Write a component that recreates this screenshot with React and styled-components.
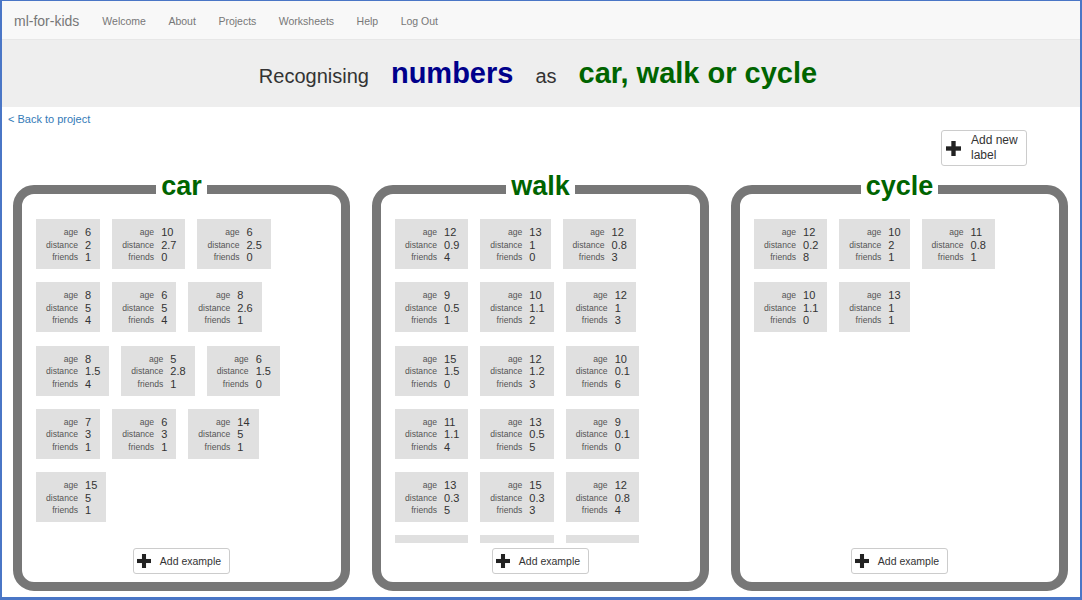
import React from "react";
import styled, { createGlobalStyle } from "styled-components";

const GlobalStyle = createGlobalStyle`
	html, body {
		margin: 0;
		padding: 0;
		background: #fff;
	}
	body {
		font-family: "Liberation Sans", Arial, Helvetica, sans-serif;
		color: #333;
	}
	* {
		box-sizing: border-box;
	}
`;

const labels = [
	{
		name: "car",
		examples: [
			[6, 2, 1], [10, 2.7, 0], [6, 2.5, 0],
			[8, 5, 4], [6, 5, 4], [8, 2.6, 1],
			[8, 1.5, 4], [5, 2.8, 1], [6, 1.5, 0],
			[7, 3, 1], [6, 3, 1], [14, 5, 1],
			[15, 5, 1],
		],
	},
	{
		name: "walk",
		examples: [
			[12, 0.9, 4], [13, 1, 0], [12, 0.8, 3],
			[9, 0.5, 1], [10, 1.1, 2], [12, 1, 3],
			[15, 1.5, 0], [12, 1.2, 3], [10, 0.1, 6],
			[11, 1.1, 4], [13, 0.5, 5], [9, 0.1, 0],
			[13, 0.3, 5], [15, 0.3, 3], [12, 0.8, 4],
			[10, 0.4, 2], [14, 0.6, 1], [11, 0.2, 3],
		],
	},
	{
		name: "cycle",
		examples: [
			[12, 0.2, 8], [10, 2, 1], [11, 0.8, 1],
			[10, 1.1, 0], [13, 1, 1],
		],
	},
];

const Frame = styled.div`
	width: 1082px;
	height: 600px;
	border-style: solid;
	border-color: #4a76c6;
	border-width: 1px 2px 3px 2px;
	overflow: hidden;
	background: #fff;
`;

const NavBar = styled.nav`
	height: 39px;
	background: #f8f8f8;
	border-bottom: 1px solid #e7e7e7;
	display: flex;
	align-items: center;
	padding: 1px 0 0 12px;
`;

const Brand = styled.a`
	font-size: 14px;
	color: #777;
	text-decoration: none;
	margin-right: 11.75px;
`;

const NavLink = styled.a`
	font-size: 10.5px;
	color: #777;
	text-decoration: none;
	padding: 0 11.25px;
`;

const Jumbotron = styled.header`
	background: #eee;
	height: 67px;
	padding: 17px 6px 17px 0;
	display: flex;
	justify-content: center;
	align-items: baseline;
	gap: 22px;
	line-height: 33px;
`;

const Plain = styled.span`
	font-size: 20px;
	color: #333;
`;

const Strong = styled.span`
	font-size: 29px;
	font-weight: bold;
	color: ${({ $color }) => $color};
`;

const BackLink = styled.a`
	display: block;
	padding: 5px 6px 0;
	font-size: 11px;
	line-height: 14px;
	color: #337ab7;
	text-decoration: none;
`;

const Toolbar = styled.div`
	display: flex;
	justify-content: flex-end;
	margin-top: 4px;
	padding-right: 53px;
`;

const Button = styled.button`
	display: flex;
	align-items: center;
	gap: ${({ $gap }) => $gap || 9}px;
	height: ${({ $h }) => $h || 26}px;
	padding: 0 ${({ $pr }) => $pr || 8}px 0 ${({ $pl }) => $pl || 3}px;
	background: #fff;
	border: 1px solid #ccc;
	border-radius: 3px;
	font-family: inherit;
	font-size: ${({ $fs }) => $fs || 10.5}px;
	color: #333;
	cursor: pointer;
`;

const ButtonText = styled.span`
	text-align: left;
	line-height: 15px;
	width: ${({ $w }) => ($w ? `${$w}px` : "auto")};
`;

const Panels = styled.div`
	display: flex;
	gap: 22px;
	padding: 0 12px 0 11px;
	margin-top: 7px;
`;

const Panel = styled.fieldset`
	flex: 1 1 0;
	min-width: 0;
	margin: 0;
	border: 9px solid #777;
	border-radius: 21px;
	padding: 0 14px 8px;
`;

const Title = styled.legend`
	margin: 0 auto;
	padding: 0 5px 6px;
	font-size: 27px;
	line-height: 27px;
	font-weight: bold;
	color: #006400;
`;

const ExampleList = styled.div`
	height: 337px;
	overflow: hidden;
	padding-top: 13px;
	display: flex;
	flex-wrap: wrap;
	align-content: flex-start;
	gap: 13.3px 12px;
`;

const Card = styled.div`
	display: grid;
	grid-template-columns: auto auto;
	grid-auto-rows: 12.5px;
	column-gap: 7px;
	align-items: center;
	height: 50px;
	padding: 7px 9px 5px 10px;
	background: #e0e0e0;
	line-height: 12.5px;
`;

const Key = styled.span`
	font-size: 8.6px;
	color: #555;
	text-align: right;
`;

const Value = styled.span`
	font-size: 11px;
	color: #333;
`;

const PanelFooter = styled.div`
	display: flex;
	justify-content: center;
	margin-top: 5px;
`;

function PlusIcon({ size = 14 }) {
	const t = size * 0.29;
	const o = (size - t) / 2;
	return (
		<svg width={size} height={size} viewBox={`0 0 ${size} ${size}`}>
			<rect x={o} y="0" width={t} height={size} fill="#222" />
			<rect x="0" y={o} width={size} height={t} fill="#222" />
		</svg>
	);
}

function ExampleCard({ values }) {
	const [age, distance, friends] = values;
	return (
		<Card>
			<Key>age</Key>
			<Value>{age}</Value>
			<Key>distance</Key>
			<Value>{distance}</Value>
			<Key>friends</Key>
			<Value>{friends}</Value>
		</Card>
	);
}

export default function App() {
	return (
		<Frame>
			<GlobalStyle />
			<NavBar>
				<Brand href="#">ml-for-kids</Brand>
				{["Welcome", "About", "Projects", "Worksheets", "Help", "Log Out"].map((l) => (
					<NavLink key={l} href="#">
						{l}
					</NavLink>
				))}
			</NavBar>

			<Jumbotron>
				<Plain>Recognising</Plain>
				<Strong $color="#00008b">numbers</Strong>
				<Plain>as</Plain>
				<Strong $color="#006400">car, walk or cycle</Strong>
			</Jumbotron>

			<BackLink href="#">&lt; Back to project</BackLink>

			<Toolbar>
				<Button $h={36} $gap={10} $pl={4} $pr={3} $fs={12}>
					<PlusIcon size={15} />
					<ButtonText $w={52}>Add new label</ButtonText>
				</Button>
			</Toolbar>

			<Panels>
				{labels.map((label) => (
					<Panel key={label.name}>
						<Title>{label.name}</Title>
						<ExampleList>
							{label.examples.map((ex, i) => (
								<ExampleCard key={i} values={ex} />
							))}
						</ExampleList>
						<PanelFooter>
							<Button>
								<PlusIcon />
								<ButtonText>Add example</ButtonText>
							</Button>
						</PanelFooter>
					</Panel>
				))}
			</Panels>
		</Frame>
	);
}
